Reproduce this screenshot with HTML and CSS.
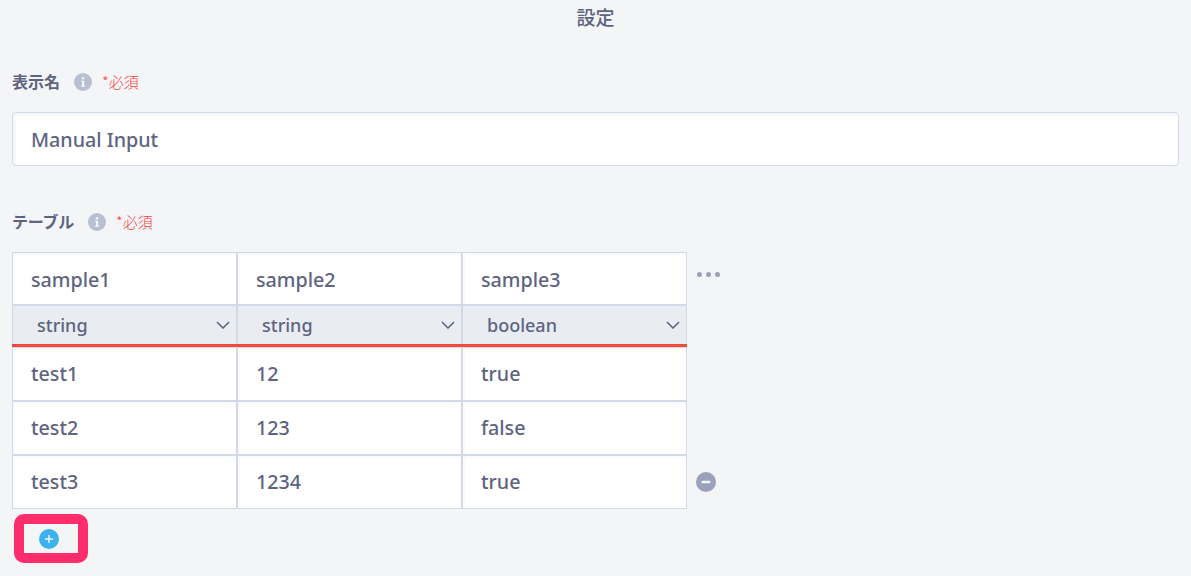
FILE: index.html
```html
<!DOCTYPE html>
<html lang="ja">
<head>
<meta charset="utf-8">
<title>設定</title>
<link rel="stylesheet" href="styles.css">
</head>
<body>
<h1 class="title">設定</h1>
<section class="field">
  <div class="label-row">
    <span class="label">表示名</span>
    <svg class="info" viewBox="0 0 18 18"><circle cx="9" cy="9" r="9" fill="#b8bfd3"/><rect x="8" y="8" width="2.2" height="5.4" fill="#f4f5f7"/><rect x="7" y="12.6" width="4.2" height="1.1" fill="#f4f5f7"/><rect x="7" y="7.6" width="3" height="1" fill="#f4f5f7"/><circle cx="9" cy="5.2" r="1.2" fill="#f4f5f7"/></svg>
    <span class="req">*必須</span>
  </div>
  <div class="text-input">Manual Input</div>
</section>
<section class="field field-table">
  <div class="label-row">
    <span class="label label-tight">テーブル</span>
    <svg class="info" viewBox="0 0 18 18"><circle cx="9" cy="9" r="9" fill="#b8bfd3"/><rect x="8" y="8" width="2.2" height="5.4" fill="#f4f5f7"/><rect x="7" y="12.6" width="4.2" height="1.1" fill="#f4f5f7"/><rect x="7" y="7.6" width="3" height="1" fill="#f4f5f7"/><circle cx="9" cy="5.2" r="1.2" fill="#f4f5f7"/></svg>
    <span class="req">*必須</span>
  </div>
  <div class="table-wrap">
    <div class="table">
      <div class="row head">
        <div class="cell">sample1</div><div class="cell">sample2</div><div class="cell">sample3</div>
      </div>
      <div class="row types">
        <div class="type"><span>string</span><svg class="chev" viewBox="0 0 14 8"><path d="M1 1l6 6 6-6" fill="none" stroke="#5a607c" stroke-width="1.5"/></svg></div>
        <div class="type"><span>string</span><svg class="chev" viewBox="0 0 14 8"><path d="M1 1l6 6 6-6" fill="none" stroke="#5a607c" stroke-width="1.5"/></svg></div>
        <div class="type"><span>boolean</span><svg class="chev" viewBox="0 0 14 8"><path d="M1 1l6 6 6-6" fill="none" stroke="#5a607c" stroke-width="1.5"/></svg></div>
      </div>
      <div class="row"><div class="cell">test1</div><div class="cell">12</div><div class="cell">true</div></div>
      <div class="row"><div class="cell">test2</div><div class="cell">123</div><div class="cell">false</div></div>
      <div class="row"><div class="cell">test3</div><div class="cell">1234</div><div class="cell">true</div></div>
    </div>
    <div class="side">
      <div class="dots"><i></i><i></i><i></i></div>
      <svg class="minus" viewBox="0 0 20 20"><circle cx="10" cy="10" r="10" fill="#9ba1bc"/><rect x="5.5" y="8.8" width="9" height="2.4" rx="1" fill="#f4f5f7"/></svg>
    </div>
  </div>
  <div class="add">
    <svg class="plus" viewBox="0 0 20 20"><circle cx="10" cy="10" r="10" fill="#3eb2ed"/><path d="M10 6v8M6 10h8" stroke="#e8f5fd" stroke-width="1.5"/></svg>
  </div>
</section>
</body>
</html>
```
FILE: styles.css
```css
* { box-sizing: border-box; }
html, body { height: 100%; }
body {
  margin: 0;
  padding: 0 12px;
  height: 576px;
  overflow: hidden;
  background: #f4f5f7;
  color: #5e6480;
  font-family: "Noto Sans", "Noto Sans CJK JP", sans-serif;
  font-weight: 500;
  font-size: 19.7px;
}
.title {
  margin: 0;
  padding-top: 5px;
  height: 66px;
  text-align: center;
  font-size: 19px;
  line-height: 24px;
  font-weight: 500;
  font-family: "Noto Sans CJK JP", sans-serif;
  color: #5e6480;
}
.label-row {
  display: flex;
  align-items: center;
  height: 32px;
}
.label {
  font-family: "Noto Sans CJK JP", sans-serif;
  font-size: 16px;
  font-weight: 700;
  line-height: 20px;
  color: #5e6480;
  position: relative;
  top: -1px;
}
.label-tight { letter-spacing: -0.25px; }
.info { width: 18px; height: 18px; margin-left: 14px; }
.req {
  margin-left: 10px;
  font-family: "Noto Sans CJK JP", sans-serif;
  font-size: 15px;
  font-weight: 300;
  color: #f5433f;
  position: relative;
  top: -1px;
}
.text-input {
  margin-top: 14px;
  width: 1167px;
  height: 54px;
  padding-left: 18px;
  display: flex;
  align-items: center;
  background: #fff;
  border: 1px solid #d3d9e6;
  border-radius: 4px;
  box-shadow: inset 3px 3px 0 #f7f8fa;
}
.field-table { margin-top: 40px; }
.table-wrap { display: flex; margin-top: 14px; }
.table { width: 675px; }
.row { display: flex; height: 54px; }
.cell {
  width: 225px;
  padding: 0 0 1px 18px;
  display: flex;
  align-items: center;
  background: #fff;
  border: 1px solid #d3d9e6;
  box-shadow: inset 2px 2px 0 #f9fafb;
}
.row.head { height: 53px; }
.row.head .cell { padding: 1px 0 0 18px; }
.row.types {
  height: 42px;
  border-bottom: 3px solid #f5493d;
}
.type {
  width: 225px;
  padding: 0 6px 0 24px;
  display: flex;
  align-items: center;
  justify-content: space-between;
  background: #e9ecf1;
  border: 1px solid #d3d9e6;
  border-bottom: 0;
  font-size: 18px;
}
.chev { width: 14px; height: 8px; }
.side {
  width: 40px;
  display: flex;
  flex-direction: column;
  justify-content: space-between;
  padding: 20px 0 17px 9px;
}
.dots { display: flex; gap: 4px; margin-left: 1px; }
.dots i { width: 5px; height: 5px; border-radius: 50%; background: #9ba1bc; }
.minus { width: 20px; height: 20px; }
.add {
  margin: 5px 0 0 2px;
  width: 74px;
  height: 49px;
  border: 10px solid #ff2d6b;
  border-radius: 10px;
  display: flex;
  align-items: center;
  padding-left: 15px;
}
.plus { width: 20px; height: 20px; }
```
